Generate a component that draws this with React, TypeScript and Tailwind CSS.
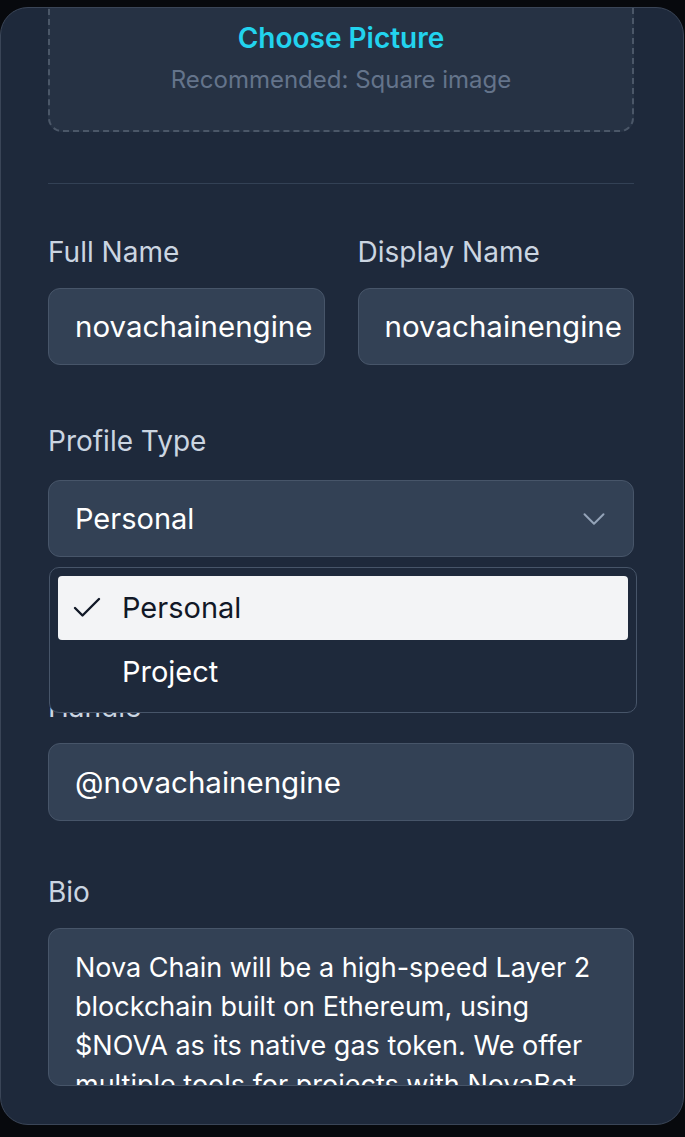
import { Check, ChevronDown } from 'lucide-react';

const font = { fontFamily: 'Inter, "Noto Sans", sans-serif' };

function Field({ label, value }: { label: string; value: string }) {
  return (
    <div className="min-w-0">
      <label className="block text-[28px] leading-[32px] text-[#cbd5e1]">{label}</label>
      <div className="mt-[20px] flex h-[77px] items-center overflow-hidden whitespace-nowrap rounded-[12px] border-[1.5px] border-[#475569] bg-[#334155] px-[26px] text-[29.5px] text-white">
        {value}
      </div>
    </div>
  );
}

export default function App() {
  return (
    <div className="h-[1137px] w-[685px] overflow-hidden bg-[#07090d] pt-[7px]" style={font}>
      <div className="relative h-[1118px] w-[684px] overflow-hidden rounded-[28px] border-[1.5px] border-[#3a4557] bg-[#1e293b] pl-[47px] pr-[49px]">
        {/* upload box, scrolled partly out of view */}
        <div className="-mt-[57px] flex flex-col items-center rounded-[14px] border-[2.5px] border-dashed border-[#4b5768] bg-[#263244] pb-[35px] pt-[67px]">
          <span className="text-[28px] font-semibold leading-[36px] text-[#22d3ee]">Choose Picture</span>
          <span className="mt-[9px] text-[24px] leading-[30px] text-[#64748b]">Recommended: Square image</span>
        </div>

        <div className="mt-[51px] h-px bg-[#334155]" />

        <div className="mt-[52px] grid grid-cols-2 gap-[33px]">
          <Field label="Full Name" value="novachainengine" />
          <Field label="Display Name" value="novachainengine" />
        </div>

        <div className="mt-[60px]">
          <label className="block text-[28px] leading-[32px] text-[#cbd5e1]">Profile Type</label>
          <div className="relative mt-[23px]">
            <div className="flex h-[77px] items-center justify-between rounded-[12px] border-[1.5px] border-[#475569] bg-[#334155] pl-[26px] pr-[20px] text-[29px] text-white">
              <span>Personal</span>
              <ChevronDown size={38} strokeWidth={1.25} className="text-[#94a3b8]" />
            </div>
            <div className="absolute left-[1px] top-[calc(100%+10px)] z-10 w-[588px] rounded-[10px] border-[1.5px] border-[#475569] bg-[#1e293b] p-[8px]">
              <div className="flex h-[64px] items-center rounded-[4px] bg-[#f3f4f6] text-[29px] text-[#111827]">
                <Check size={36} strokeWidth={1.6} className="ml-[11px] text-[#111827]" />
                <span className="ml-[17px]">Personal</span>
              </div>
              <div className="flex h-[64px] items-center text-[29px] text-white">
                <span className="ml-[64px]">Project</span>
              </div>
            </div>
          </div>
        </div>

        <div className="mt-[134px]">
          <label className="block text-[28px] leading-[32px] text-[#cbd5e1]">Handle</label>
          <div className="mt-[20px] flex h-[78px] items-center rounded-[12px] border-[1.5px] border-[#475569] bg-[#334155] px-[26px] text-[29.5px] text-white">
            @novachainengine
          </div>
        </div>

        <div className="mt-[55px]">
          <label className="block text-[28px] leading-[32px] text-[#cbd5e1]">Bio</label>
          <div className="mt-[20px] h-[158px] overflow-hidden rounded-[12px] border-[1.5px] border-[#475569] bg-[#334155] px-[26px] pt-[19px] text-[27px] leading-[39px] text-white">
            Nova Chain will be a high-speed Layer 2 blockchain built on Ethereum, using $NOVA as its native gas token. We offer multiple tools for projects with NovaBot, NovaSwap and more.
          </div>
        </div>
      </div>
    </div>
  );
}
